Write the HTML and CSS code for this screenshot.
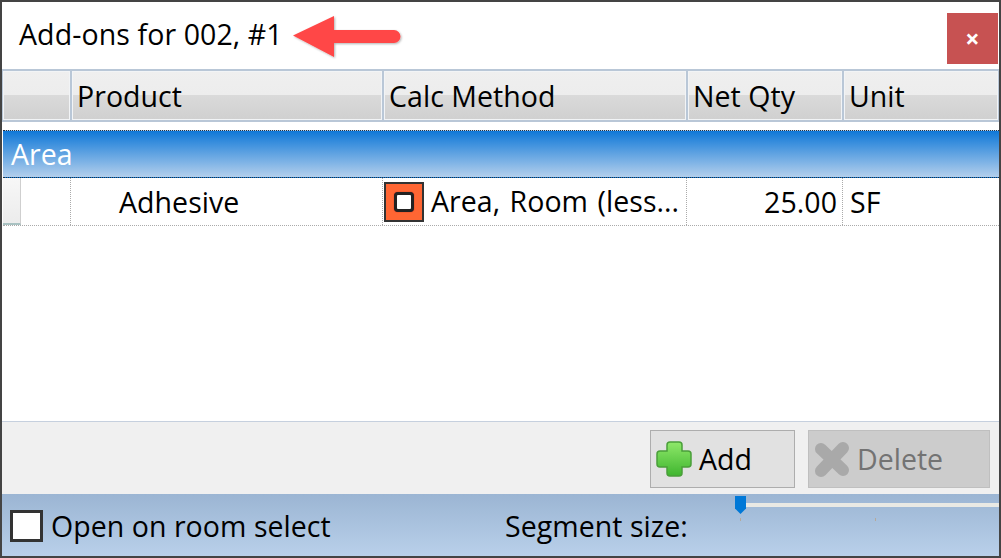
FILE: index.html
```html
<!DOCTYPE html>
<html lang="en">
<head>
<meta charset="utf-8">
<title>Add-ons</title>
<link rel="stylesheet" href="styles.css">
</head>
<body>
<div class="window">
  <header class="titlebar">
    <h1 class="title">Add-ons for 002, #1</h1>
    <svg class="arrow" width="116" height="48" viewBox="0 0 116 48">
      <defs><filter id="s" x="-10%" y="-20%" width="120%" height="140%"><feDropShadow dx="1" dy="1" stdDeviation="1.200" flood-color="#000" flood-opacity=".3"/></filter></defs>
      <path d="M2 21.500 L43 2 V16 H103 a6.500 6.500 0 0 1 0 13 H43 V43 Z" fill="#ff4747" filter="url(#s)"/>
    </svg>
    <button class="close">×</button>
  </header>
  <div class="head-row">
    <div class="hcell"></div>
    <div class="hcell">Product</div>
    <div class="hcell">Calc Method</div>
    <div class="hcell">Net Qty</div>
    <div class="hcell">Unit</div>
  </div>
  <div class="grid-body">
    <div class="group">Area</div>
    <div class="row">
      <div class="cell first"><span class="row-handle"></span></div>
      <div class="cell product">Adhesive</div>
      <div class="cell method">
        <span class="method-icon"><span class="method-hole"></span></span>
        <span class="method-text">Area, Room (less...</span>
      </div>
      <div class="cell qty">25.00</div>
      <div class="cell unit">SF</div>
    </div>
  </div>
  <div class="actions">
    <button class="btn add">
      <svg class="soft" width="38" height="38" viewBox="0 0 38 38">
        <defs><linearGradient id="g" x1="0" y1="0" x2="0" y2="1"><stop offset="0" stop-color="#8fe86a"/><stop offset="1" stop-color="#3fb52f"/></linearGradient></defs>
        <path d="M15 2 H24 a3 3 0 0 1 3 3 V11 H33 a3 3 0 0 1 3 3 V24 a3 3 0 0 1 -3 3 H27 V33 a3 3 0 0 1 -3 3 H15 a3 3 0 0 1 -3 -3 V27 H5 a3 3 0 0 1 -3 -3 V14 a3 3 0 0 1 3 -3 H12 V5 a3 3 0 0 1 3 -3 Z" fill="url(#g)" stroke="#4a9e3a" stroke-width="1.500"/>
      </svg>
      <span>Add</span>
    </button>
    <button class="btn delete">
      <svg class="soft" width="38" height="38" viewBox="0 0 38 38">
        <path d="M8 9 L30 30 M30 8 L8 31" fill="none" stroke="#a9a9a9" stroke-width="12" stroke-linecap="round"/>
      </svg>
      <span>Delete</span>
    </button>
  </div>
  <footer class="statusbar">
    <label class="check"><span class="box"></span>Open on room select</label>
    <span class="segment">Segment size:</span>
    <div class="slider">
      <span class="thumb"></span>
      <span class="tick t1"></span>
      <span class="tick t2"></span>
    </div>
  </footer>
</div>
</body>
</html>
```
FILE: styles.css
```css
* { box-sizing: border-box; }
html, body { margin: 0; padding: 0; }
body { width: 1001px; height: 558px; overflow: hidden; font-family: "Open Sans", "Noto Sans", sans-serif; font-size: 28.5px; letter-spacing: .05px; color: #000; }
.window { width: 1001px; height: 558px; display: flex; flex-direction: column; border: 2px solid #444; background: #fff; }
.titlebar { position: relative; height: 67px; flex: none; display: flex; align-items: flex-start; justify-content: space-between; }
.title { margin: 0; padding: 13px 0 0 17px; font-size: 28.5px; font-weight: 400; line-height: 38px; letter-spacing: .1px; }
.arrow { position: absolute; left: 289px; top: 12px; }
.close { width: 51px; height: 51px; margin: 11px 1px 0 0; border: 0; padding: 0; background: #c75252; color: #fff; font: 700 25px/51px "Open Sans", sans-serif; }
.head-row { height: 53px; flex: none; display: grid; grid-template-columns: 69px 312px 304px 156px 1fr; padding: 2px 1px; background: #b9c7d7; }
.hcell { margin-right: 2px; padding: 3px 0 0 4px; line-height: 42px; border: 1px solid #f2f4f6; background: linear-gradient(#efefef 0, #ededed 48%, #dadada 50%, #d0d0d0 100%); }
.hcell:last-child { margin-right: 0; }
.grid-body { flex: 1; padding: 8px 0 0 1px; background: #fff; border-bottom: 1px solid #c6d0de; }
.group { height: 48px; padding-left: 8px; line-height: 46px; color: #fff; background: linear-gradient(#0f78d8, #b3cfec); border-top: 1px dotted #234; border-bottom: 1px dotted #234; }
.row { height: 48px; display: grid; grid-template-columns: 68px 312px 304px 156px 1fr; border-bottom: 1px dotted #aaa; line-height: 49px; }
.cell { border-right: 1px dotted #aaa; white-space: nowrap; overflow: hidden; }
.row-handle { display: block; width: 18px; height: 47px; background: linear-gradient(#f7f7f7, #ececec); border-right: 1px solid #cfcfcf; border-bottom: 2px solid #a9c2c2; }
.product { padding-left: 48px; }
.method { display: flex; align-items: center; padding-left: 1px; }
.method-icon { width: 40px; height: 40px; flex: none; display: flex; align-items: center; justify-content: center; background: #ff6633; border: 2px solid #333; margin-right: 7px; }
.method-hole { width: 20px; height: 20px; background: #fff; border: 3px solid #222; border-radius: 4px; box-shadow: 0 0 1px #911; }
.method-text { word-spacing: 2px; }
.qty { text-align: right; padding-right: 5px; }
.unit { padding-left: 7px; border-right: 0; }
.actions { height: 72px; flex: none; display: flex; justify-content: flex-end; align-items: flex-start; gap: 13px; padding: 8px 9px 0 0; background: #f0f0f0; }
.btn { height: 58px; display: flex; align-items: center; padding: 0 0 0 4px; gap: 6px; font: 400 28.5px/1 "Open Sans", sans-serif; }
.soft { filter: blur(.5px); flex: none; }
.add { width: 145px; background: #e1e1e1; border: 1px solid #adadad; color: #000; }
.delete { width: 182px; background: #ccc; border: 1px solid #bfbfbf; color: #737373; }
.statusbar { position: relative; height: 62px; flex: none; display: flex; align-items: flex-start; padding: 16px 0 0 8px; background: linear-gradient(#9bb5d3, #b9d0ea); }
.check { display: flex; align-items: center; gap: 8px; width: 495px; line-height: 32px; }
.box { width: 33px; height: 32px; background: #fff; border: 3px solid #333; }
.segment { line-height: 32px; }
.slider { position: absolute; left: 733px; top: 0; right: 0; height: 30px; }
.slider::before { content: ""; position: absolute; left: 0; right: 0; top: 9px; height: 4px; background: #e9e9e4; }
.thumb { position: absolute; left: 0; top: 2px; width: 11px; height: 18px; background: #0078d7; clip-path: polygon(0 0, 100% 0, 100% 70%, 50% 100%, 0 70%); }
.tick { position: absolute; top: 24px; width: 1px; height: 3px; background: #b5a99a; }
.t1 { left: 5px; }
.t2 { left: 140px; }
```
